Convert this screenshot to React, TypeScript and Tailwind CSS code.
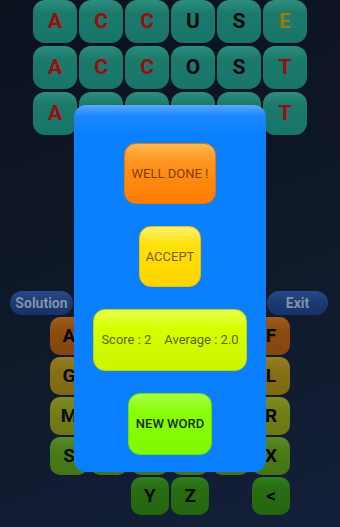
import React from 'react';

type Letter = { ch: string; color: string };

const red = 'text-[#9c0c0c]';
const black = 'text-[#0a0a0a]';
const gold = 'text-[#9a7a08]';

const wordRows: Letter[][] = [
  [
    { ch: 'A', color: red },
    { ch: 'C', color: red },
    { ch: 'C', color: red },
    { ch: 'U', color: black },
    { ch: 'S', color: black },
    { ch: 'E', color: gold },
  ],
  [
    { ch: 'A', color: red },
    { ch: 'C', color: red },
    { ch: 'C', color: red },
    { ch: 'O', color: black },
    { ch: 'S', color: black },
    { ch: 'T', color: red },
  ],
  [
    { ch: 'A', color: red },
    { ch: '', color: red },
    { ch: '', color: red },
    { ch: '', color: red },
    { ch: '', color: red },
    { ch: 'T', color: red },
  ],
];

// keyboard rows, each with its own (dimmed) colour
const keyRows = [
  { keys: ['A', 'B', 'C', 'D', 'E', 'F'], bg: 'bg-[linear-gradient(to_bottom,#9c601e,#8c4c10_35%,#84460e)]' },
  { keys: ['G', 'H', 'I', 'J', 'K', 'L'], bg: 'bg-[linear-gradient(to_bottom,#968024,#867016_35%,#7e6812)]' },
  { keys: ['M', 'N', 'O', 'P', 'Q', 'R'], bg: 'bg-[linear-gradient(to_bottom,#828a26,#747e18_35%,#6c7614)]' },
  { keys: ['S', 'T', 'U', 'V', 'W', 'X'], bg: 'bg-[linear-gradient(to_bottom,#5a8a28,#4c7c18_35%,#447414)]' },
];

const lastRowBg = 'bg-[linear-gradient(to_bottom,#327c20,#286c12_35%,#246610)]';

function WordTile({ l }: { l: Letter }) {
  return (
    <div
      className={`flex h-[43px] w-[44px] items-center justify-center rounded-[12px] bg-[linear-gradient(to_bottom,#2c8e7e,#1c7a6b_30%,#18746a)] text-[21px] font-bold ${l.color}`}
    >
      {l.ch}
    </div>
  );
}

function Key({ ch, bg }: { ch: string; bg: string }) {
  return (
    <div className={`flex h-[38px] w-[38px] items-center justify-center rounded-[10px] text-[19px] font-bold text-[#080808] ${bg}`}>
      {ch}
    </div>
  );
}

export default function App() {
  return (
    <div className="relative h-[527px] w-[340px] overflow-hidden bg-[linear-gradient(160deg,#0b111d,#101a2b_60%,#13203a)] font-['Roboto',sans-serif]">
      {/* guessed words */}
      <div className="flex flex-col items-center gap-[3px]">
        {wordRows.map((row, i) => (
          <div key={i} className="flex gap-[2px]">
            {row.map((l, j) => (
              <WordTile key={j} l={l} />
            ))}
          </div>
        ))}
      </div>

      {/* Solution / Exit */}
      <div className="mt-[156px] flex justify-between pl-[10px] pr-[12px]">
        <div className="flex h-[24px] w-[63px] items-center justify-center rounded-full bg-[linear-gradient(to_bottom,#28498a,#1c3a74_45%,#183268)] text-[14px] font-bold text-[#8292a8]">
          Solution
        </div>
        <div className="flex h-[24px] w-[61px] items-center justify-center rounded-full bg-[linear-gradient(to_bottom,#28498a,#1c3a74_45%,#183268)] text-[14px] font-bold text-[#8292a8]">
          Exit
        </div>
      </div>

      {/* keyboard */}
      <div className="mx-auto mt-[2px] grid w-[240px] grid-cols-6 gap-x-[2.4px] gap-y-[2px]">
        {keyRows.map((r) => r.keys.map((k) => <Key key={k} ch={k} bg={r.bg} />))}
        <div className="col-start-3">
          <Key ch="Y" bg={lastRowBg} />
        </div>
        <Key ch="Z" bg={lastRowBg} />
        <div className="col-start-6">
          <Key ch="<" bg={lastRowBg} />
        </div>
      </div>

      {/* result dialog */}
      <div className="absolute left-[74px] top-[105px] flex h-[367px] w-[192px] flex-col items-center gap-[22px] rounded-[12px] bg-[linear-gradient(to_bottom,#5aa8ff,#1a88ff_3%,#0a80ff_8%,#0a80ff)] pt-[38px]">
        <div className="flex h-[61px] w-[92px] items-center justify-center rounded-[12px] border border-[#e87800] bg-[linear-gradient(to_bottom,#ffb850,#ff9420_30%,#ff7c00)] text-[13px] text-[#7c3c0c]">
          WELL DONE !
        </div>
        <div className="flex h-[61px] w-[62px] items-center justify-center rounded-[12px] border border-[#f0c000] bg-[linear-gradient(to_bottom,#fff070,#ffe20a_30%,#ffd400)] text-[13px] text-[#7a6200]">
          ACCEPT
        </div>
        <div className="flex h-[62px] w-[154px] items-center justify-center whitespace-pre rounded-[12px] border border-[#b8d800] bg-[linear-gradient(to_bottom,#e8ff50,#d6ff00_30%,#ccf400)] text-[13px] text-[#5e6400]">
          {'Score : 2    Average : 2.0'}
        </div>
        <div className="flex h-[62px] w-[84px] items-center justify-center rounded-[12px] border border-[#70e000] bg-[linear-gradient(to_bottom,#a8ff40,#88ff08_30%,#80f800)] text-[13px] font-medium text-[#14300a]">
          NEW WORD
        </div>
      </div>
    </div>
  );
}
